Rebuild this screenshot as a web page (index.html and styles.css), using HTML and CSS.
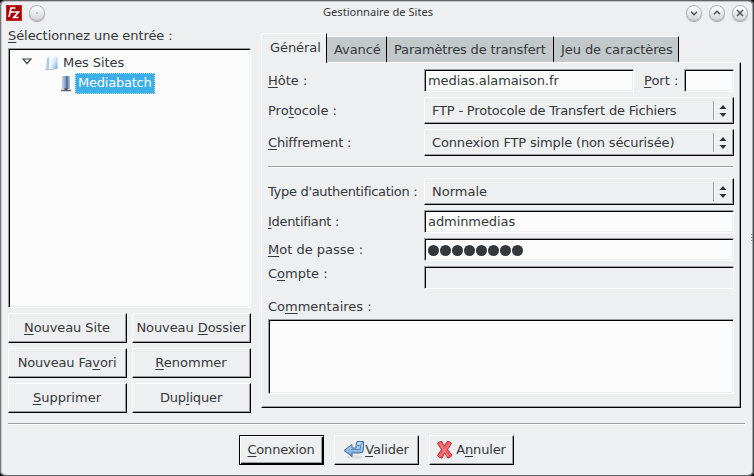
FILE: index.html
```html
<!DOCTYPE html>
<html lang="fr">
<head>
<meta charset="utf-8">
<title>Gestionnaire de Sites</title>
<link rel="stylesheet" href="styles.css">
</head>
<body>
<div class="window">
  <header class="titlebar">
    <svg class="logo" width="16" height="16" viewBox="0 0 16 16"><rect width="16" height="16" fill="#a90008"/><rect x=".5" y=".5" width="15" height="15" fill="none" stroke="#c32a2a"/><path d="M3 12 5 3H9.5M4.2 7H8M8.3 7H12.5L7.8 12.5H12.5" fill="none" stroke="#fff" stroke-width="1.7"/></svg>
    <span class="round"><svg width="16" height="16" viewBox="0 0 16 16"><circle cx="8" cy="8" r=".7" fill="#777" stroke="none"/></svg></span>
    <h1>Gestionnaire de Sites</h1>
    <span class="round"><svg width="16" height="16" viewBox="0 0 16 16"><path d="m5 6.8 3 3 3-3"/></svg></span>
    <span class="round"><svg width="16" height="16" viewBox="0 0 16 16"><path d="m5 9.2 3-3 3 3"/></svg></span>
    <span class="round"><svg width="16" height="16" viewBox="0 0 16 16"><path d="m5 5 6 6M11 5l-6 6"/></svg></span>
  </header>

  <main class="content">
    <section class="sites">
      <div class="caption snug"><u>S</u>électionnez une entrée :</div>
      <div class="tree sunken">
        <div class="node">
          <svg class="arrow" width="10" height="7" viewBox="0 0 10 7"><path d="M1 1H9L5 5.5Z" fill="#fff" stroke="#3c4043" stroke-width="1.2"/></svg>
          <svg class="folder" width="15" height="16" viewBox="0 0 15 16"><defs><linearGradient id="fold" x2="1" y2="1"><stop stop-color="#fff"/><stop offset=".45" stop-color="#dcebfa"/><stop offset="1" stop-color="#5b9fe0"/></linearGradient></defs><path d="M2 3 4 2v12L1 14Z" fill="#a9cdee"/><path d="M4 2h5v11l-5 1Z" fill="#f3f7fb"/><path d="M6 3 11 1l1.500 1v11.500L6 15Z" fill="url(#fold)"/><path d="M0 14.500h9" stroke="#b7c7d7"/></svg>
          <span class="snug">Mes Sites</span>
        </div>
        <div class="node child">
          <svg class="server" width="12" height="16" viewBox="0 0 12 16"><defs><linearGradient id="srv" x2="1"><stop stop-color="#c5d6ea"/><stop offset=".45" stop-color="#7d9dc8"/><stop offset=".6" stop-color="#48658d"/><stop offset="1" stop-color="#b4cdea"/></linearGradient></defs><path d="M2 0h8v13H2z" fill="url(#srv)"/><path d="M1 14.500h10" stroke="#5e6976" stroke-width="1.500"/><path d="M6 12v3" stroke="#4e5966" stroke-width="3"/></svg>
          <span class="selected">Mediabatch</span>
        </div>
      </div>
      <div class="actions">
        <button><span class="snug"><u>N</u>ouveau Site</span></button>
        <button><span class="snug">Nouveau <u>D</u>ossier</span></button>
        <button><span class="tight">Nouveau Fa<u>v</u>ori</span></button>
        <button><span><u>R</u>enommer</span></button>
        <button><span><u>S</u>upprimer</span></button>
        <button><span class="tight">Dup<u>l</u>iquer</span></button>
      </div>
    </section>

    <section class="notebook">
      <nav class="tabs">
        <div class="tab active snug">Général</div>
        <div class="tab avance snug">Avancé</div>
        <div class="tab transfert tight">Paramètres de transfert</div>
        <div class="tab jeu snug">Jeu de caractères</div>
      </nav>
      <div class="panel">
        <div class="row host">
          <label><u>H</u>ôte :</label>
          <div class="field sunken snug">medias.alamaison.fr</div>
          <label class="port"><u>P</u>ort :</label>
          <div class="field sunken port-field"></div>
        </div>
        <div class="row select">
          <label>Pro<u>t</u>ocole :</label>
          <div class="combo"><span class="tighter">FTP - Protocole de Transfert de Fichiers</span><i class="spin"><svg width="8" height="14" viewBox="0 0 8 14"><path d="M.5 5 4 1l3.500 4ZM.5 9H7.500L4 13Z" fill="#303437"/></svg></i></div>
        </div>
        <div class="row select">
          <label class="tighter"><u>C</u>hiffrement :</label>
          <div class="combo"><span class="tight">Connexion FTP simple (non sécurisée)</span><i class="spin"><svg width="8" height="14" viewBox="0 0 8 14"><path d="M.5 5 4 1l3.500 4ZM.5 9H7.500L4 13Z" fill="#303437"/></svg></i></div>
        </div>
        <div class="rule"></div>
        <div class="row select">
          <label class="tightest">Type d'authentification :</label>
          <div class="combo"><span>Normale</span><i class="spin"><svg width="8" height="14" viewBox="0 0 8 14"><path d="M.5 5 4 1l3.500 4ZM.5 9H7.500L4 13Z" fill="#303437"/></svg></i></div>
        </div>
        <div class="row">
          <label class="tightest"><u>I</u>dentifiant :</label>
          <div class="field sunken snug">adminmedias</div>
        </div>
        <div class="row">
          <label><u>M</u>ot de passe :</label>
          <div class="field sunken"><span class="dots"><b></b><b></b><b></b><b></b><b></b><b></b><b></b><b></b></span></div>
        </div>
        <div class="row account">
          <label>C<u>o</u>mpte :</label>
          <div class="field sunken disabled"></div>
        </div>
        <div class="comments">
          <label>Co<u>m</u>mentaires :</label>
          <div class="area sunken"></div>
        </div>
      </div>
    </section>
  </main>

  <div class="rule bottom"></div>
  <footer class="footer">
    <button class="default"><span class="tighter"><u>C</u>onnexion</span></button>
    <button><svg width="22" height="20" viewBox="0 0 22 20"><defs><linearGradient id="ret" x2="0" y2="1"><stop stop-color="#c8dff4"/><stop offset="1" stop-color="#6c9ed5"/></linearGradient></defs><ellipse cx="12" cy="17" rx="8" ry="1.800" fill="#d8dce1"/><path d="M1 10.500 9 4.500v3.500h4V5.500l1-4h6.500v8q0 3.500-4 3.500H9v3.500Z" fill="url(#ret)" stroke="#416fa6"/><path d="M14 5.500h3.500l2.500-3.500M17.500 5.500V8.500q0 1-1.500 1H8" fill="none" stroke="#5e89bb"/></svg><span class="tight"><u>V</u>alider</span></button>
    <button><svg class="cross" width="17" height="20" viewBox="0 0 17 20"><ellipse cx="8" cy="17.500" rx="7.500" ry="1.500" fill="#dfdcde"/><path d="M1.500 3.500Q3.500 1 5.500 1.500L8.500 6 11 1.500q3-.5 4.500 2L11.500 9.500 16 15q-1.500 3-4 3L8.500 13 6 18q-3 0-4.500-2.500l4-6Z" fill="#ee5b62" stroke="#bd2f3b" stroke-linejoin="round"/><path d="m3.800 4 8.200 12M13.200 4 4.500 16" stroke="#f58b8e" stroke-width="1.200"/></svg><span class="tight">A<u>n</u>nuler</span></button>
  </footer>
  <div class="grip"></div>
</div>
</body>
</html>
```
FILE: styles.css
```css
* { box-sizing: border-box; }
body { margin: 0; background: #000; overflow: hidden; }
.window {
  position: relative;
  width: 754px;
  height: 476px;
  padding: 0 8px;
  background: #eeeff1;
  border-top: 1px solid #606265;
  border-bottom: 1px solid #606265;
  border-radius: 5px;
  box-shadow: inset 1px 0 #77797c, inset -1px 0 #45474a, inset 2px 0 #c9cbcd, inset -2px 0 #a5a7aa, inset 0 1px #c0c2c4;
  font: 13px/16px "DejaVu Sans", sans-serif;
  color: #34383b;
}
u { text-decoration: underline; text-decoration-thickness: 1px; text-underline-offset: 2px; }
svg { display: block; flex: none; }
.snug { letter-spacing: -.08px; }
.tight { letter-spacing: -.15px; }
.tighter { letter-spacing: -.19px; }
.tightest { letter-spacing: -.31px; }

.titlebar { display: flex; align-items: center; height: 23px; margin: 0 -2px; }
.titlebar h1 { flex: 1; margin: 0; padding-left: 32px; text-align: center; font: 11.1px/16px "Noto Sans", sans-serif; position: relative; top: -1px; }
.round { width: 16px; height: 16px; margin-left: 7px; border-radius: 50%; border: 1px solid #b2b5b8; background: linear-gradient(#fff, #d4d6d8); box-shadow: 0 1px 1px #a0a2a5; }
.round svg { margin: -1px; fill: none; stroke: #505356; stroke-width: 1.5; }

.content { display: flex; gap: 10px; height: 389px; }
.sites { width: 243px; }
.caption { height: 24px; padding-top: 4px; }
.sunken { background: #fcfcfc; border: 1px solid; border-color: #9c9fa2 #fff #fff #9c9fa2; box-shadow: inset 1px 1px #000, inset -1px -1px #eeeff1; }
.tree { height: 260px; padding: 3px 1px; }
.node { display: flex; align-items: center; height: 21px; }
.arrow { margin-left: 12px; margin-top: -3px; }
.folder { margin: 0 3px 0 13px; }
.child { padding-left: 50px; }
.selected { height: 21px; margin-left: 3px; padding: 2px 0 0 3px; width: 80px; letter-spacing: -.22px; background: #3daee9; color: #fcfcfc; outline: 1px dotted #b8dff5; outline-offset: -1px; }

button { display: flex; align-items: center; justify-content: center; height: 30px; margin: 0; padding: 0 1px 1px 0; color: inherit; font: inherit; white-space: nowrap; background: #eeeff1; border: 1px solid; border-color: #fff #000 #000 #fff; border-radius: 0; box-shadow: inset -1px -1px #9c9fa2; }
.actions { display: grid; grid-template-columns: 119px 119px; gap: 5px; margin-top: 5px; }

.notebook { width: 480px; padding-top: 9px; }
.tabs { display: flex; align-items: flex-end; height: 29px; white-space: nowrap; }
.tab { height: 26px; padding: 5px 0 0 7px; background: #c3c8cb; border-top: 1px solid #fff; border-right: 1px solid #000; }
.tab.active { position: relative; width: 66px; height: 30px; margin-bottom: -1px; padding: 6px 0 0 8px; background: #eeeff1; border-left: 1px solid #fff; }
.avance { width: 60px; }
.transfert { width: 167px; }
.jeu { width: 125px; }
.panel { height: 346px; padding: 6px 6px 0; border: 1px solid; border-color: #fff #000 #000 #fff; box-shadow: inset -1px -1px #9c9fa2; }
.row { display: grid; grid-template-columns: 156px 310px; height: 23px; margin-bottom: 5px; align-items: center; white-space: nowrap; }
.row.host { grid-template-columns: 156px 210px 50px 50px; }
.port { padding-left: 10px; }
.row.select { height: 27px; }
.field { height: 23px; padding: 3px 3px 0; }
.disabled { background: #eeeff1; }
.combo { display: flex; align-items: center; height: 27px; padding-left: 7px; border: 1px solid; border-color: #fff #000 #000 #fff; box-shadow: inset -1px -1px #9c9fa2; }
.spin { display: flex; align-items: center; width: 20px; height: 19px; margin-left: auto; padding-left: 5px; border-left: 1px solid #9c9fa2; box-shadow: inset 1px 0 #fff; }
.rule { height: 2px; background: #9c9fa2; border-bottom: 1px solid #fff; margin: 10px 1px 10px 0; }
.dots { display: flex; gap: 1px; padding-top: 3px; }
.dots b { width: 11px; height: 11px; border-radius: 50%; background: #34383b; }
.account label { margin-top: -7px; }
.comments { padding-top: 5px; }
.comments label { display: block; height: 20px; }
.area { height: 75px; }

.rule.bottom { margin: 10px 5px 10px 0; width: 737px; }
.footer { display: flex; gap: 10px; padding-left: 231px; }
.footer button { width: 85px; }
.footer .default { border: 1px solid #000; box-shadow: inset 1px 1px #fff, inset -1px -1px #000, inset -2px -2px #9c9fa2; }
.footer .cross { margin-right: 3px; }
.grip { position: absolute; right: 1px; top: 233px; width: 2px; height: 9px; background: repeating-linear-gradient(#8c8f92 0 1px, transparent 1px 3px); }
```
